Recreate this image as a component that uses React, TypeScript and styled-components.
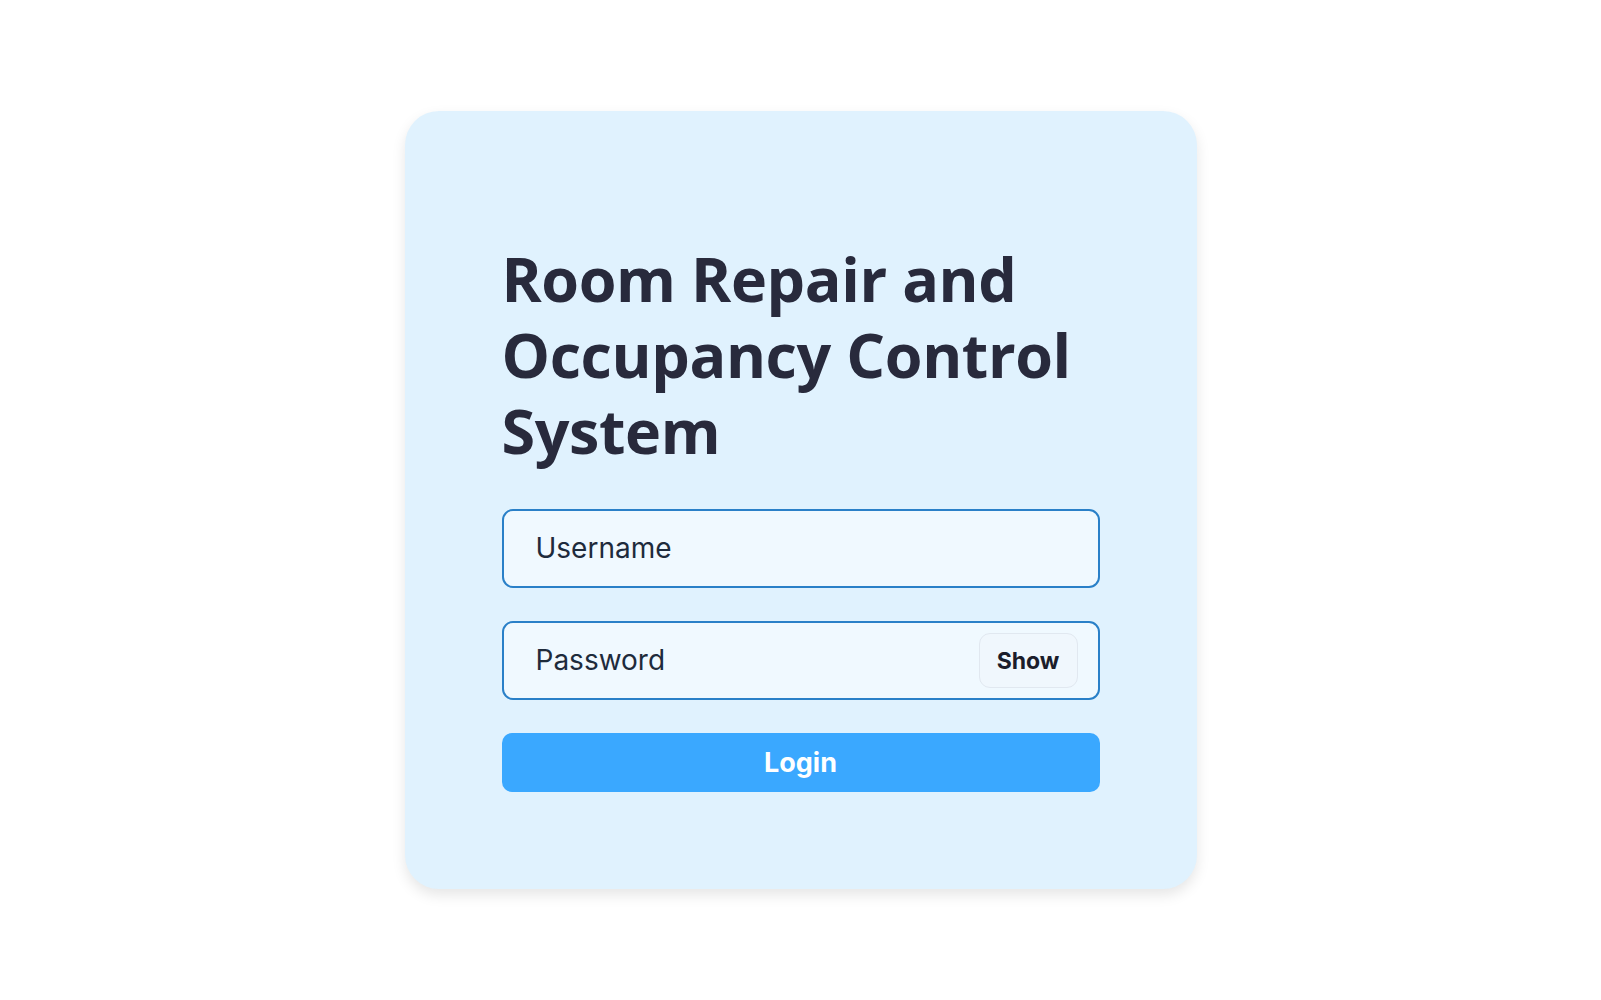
import { useState } from 'react';
import { styled, createGlobalStyle } from 'styled-components';

const GlobalStyle = createGlobalStyle`
  * {
    box-sizing: border-box;
  }

  body {
    margin: 0;
    background: #ffffff;
    font-family: Inter, "Noto Sans", sans-serif;
  }
`;

export default function App() {
  const [showPassword, setShowPassword] = useState(false);

  return (
    <Page>
      <GlobalStyle />
      <Card>
        <Title>Room Repair and Occupancy Control System</Title>
        <Form onSubmit={(e) => e.preventDefault()}>
          <Field>
            <Input type="text" placeholder="Username" />
          </Field>
          <Field>
            <Input type={showPassword ? 'text' : 'password'} placeholder="Password" />
            <ShowButton type="button" onClick={() => setShowPassword(!showPassword)}>
              {showPassword ? 'Hide' : 'Show'}
            </ShowButton>
          </Field>
          <LoginButton type="submit">Login</LoginButton>
        </Form>
      </Card>
    </Page>
  );
}

const Page = styled.div`
  min-height: 100vh;
  display: flex;
  align-items: center;
  justify-content: center;
`;

const Card = styled.div`
  width: 792px;
  padding: 96px 97px 97px;
  background: #e0f2fe;
  border-radius: 34px;
  box-shadow: 0 6px 14px rgba(0, 0, 0, 0.1);
`;

const Title = styled.h1`
  margin: 34px 0 40px;
  font-family: "Open Sans", "Noto Sans", sans-serif;
  font-size: 61px;
  font-weight: 700;
  line-height: 76px;
  letter-spacing: -0.4px;
  color: #282a3c;
`;

const Form = styled.form`
  display: flex;
  flex-direction: column;
  gap: 33px;
`;

const Field = styled.div`
  position: relative;
  display: flex;
  align-items: center;
`;

const Input = styled.input`
  width: 100%;
  padding: 20px 32px;
  font-family: Inter, sans-serif;
  font-size: 28px;
  line-height: 35px;
  color: #1e2b3c;
  background: #f0f9ff;
  border: 2px solid #2a80c8;
  border-radius: 11px;
  outline: none;

  &::placeholder {
    color: #1e2b3c;
    opacity: 1;
  }
`;

const ShowButton = styled.button`
  position: absolute;
  right: 22px;
  width: 99px;
  height: 55px;
  font-family: Inter, sans-serif;
  font-size: 23px;
  font-weight: 700;
  color: #1b1d2b;
  background: #f0f7fd;
  border: 1.5px solid #e1e8f0;
  border-radius: 11px;
  cursor: pointer;
`;

const LoginButton = styled.button`
  height: 59px;
  font-family: Inter, sans-serif;
  font-size: 27px;
  font-weight: 700;
  color: #ffffff;
  background: #3aa8ff;
  border: none;
  border-radius: 10px;
  cursor: pointer;
`;
